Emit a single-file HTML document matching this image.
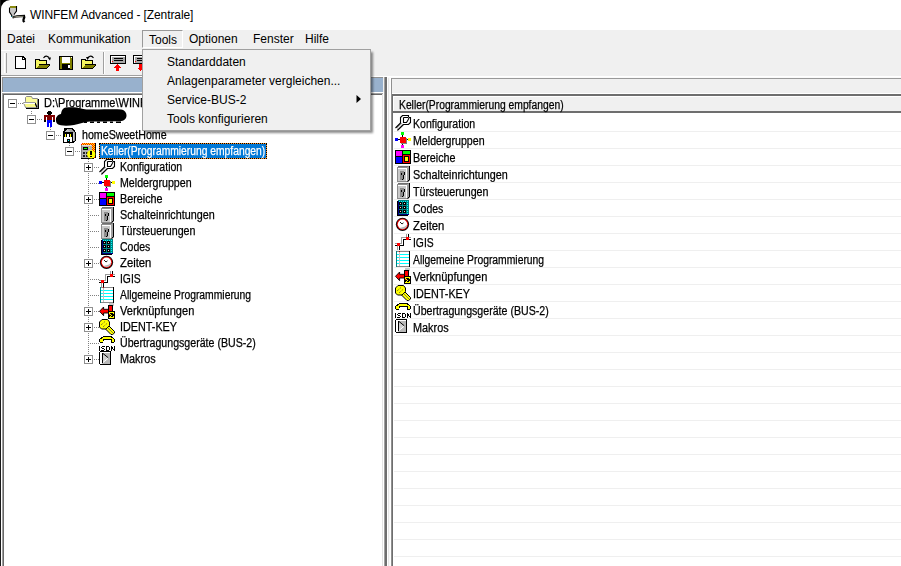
<!DOCTYPE html>
<html><head><meta charset="utf-8">
<style>
*{box-sizing:border-box;margin:0;padding:0}
html,body{width:901px;height:566px;overflow:hidden;background:#fff;position:relative;font-family:"Liberation Sans",sans-serif;color:#000}
.a{position:absolute}
.t12{font-size:12px;line-height:12px;white-space:pre}
.t11{font-size:12px;line-height:12px;white-space:pre;transform:scaleX(0.86);transform-origin:0 0;-webkit-text-stroke:0.25px currentColor}
svg{position:absolute;overflow:visible}
.dh{position:absolute;height:1px;background:repeating-linear-gradient(90deg,#808080 0 1px,transparent 1px 2px)}
.dv{position:absolute;width:1px;background:repeating-linear-gradient(180deg,#808080 0 1px,transparent 1px 2px)}
.box{position:absolute;width:9px;height:9px;border:1px solid #909090;background:#fff}
.mh{position:absolute;left:1px;top:3px;width:5px;height:1px;background:#000}
.mv{position:absolute;left:3px;top:1px;width:1px;height:5px;background:#000}
.sel{border:1px dotted #000;background:linear-gradient(#0078d7,#0078d7) padding-box,#ff9020 border-box}
</style></head><body>
<!-- window corner + left border -->
<div class="a" style="left:0;top:0;width:14px;height:14px;background:#000"></div>
<div class="a" style="left:1px;top:0;width:30px;height:30px;background:#fff;border-top-left-radius:9px"></div>
<div class="a" style="left:0;top:0;width:1px;height:566px;background:#1a1a1a"></div>

<!-- title -->

<svg style="left:9px;top:5px" width="17" height="18" viewBox="0 0 17 18" shape-rendering="crispEdges">
<path d="M1 1 H8 V6 L5.5 10 V11 H3 V10 L1 7Z" fill="#c8c8c8"/>
<rect x="1" y="1" width="7" height="1.5" fill="#8a8a10"/>
<path d="M0.5 2.5 V7 L2.5 10 L3 11.5 M7.5 1 V6 L5 9.5" stroke="#000" fill="none" stroke-width="1.1" shape-rendering="auto"/>
<path d="M3.5 12.5 L8 11.3 L15 11 L15.3 12.5 L14.5 14.5 L14.5 16 L15.5 17" stroke="#000" fill="none" stroke-width="2.2" shape-rendering="auto"/>
<path d="M4.5 12.3 L8 11.5 L14.5 11.3" stroke="#b8b8a0" fill="none" stroke-width="0.8" shape-rendering="auto"/>
<rect x="2" y="11" width="1" height="1" fill="#008080"/>
</svg>
<div class="a t12" style="left:30px;top:9px;letter-spacing:-0.1px">WINFEM Advanced - [Zentrale]</div>

<!-- menubar -->
<div class="a" style="left:1px;top:30px;width:900px;height:19px;background:#f0f0f0"></div>
<div class="a t12" style="left:7px;top:33px">Datei</div>
<div class="a t12" style="left:48px;top:33px">Kommunikation</div>
<div class="a" style="left:142px;top:30px;width:41px;height:18px;border-left:1px solid #999;border-top:1px solid #999;border-right:1px solid #fff;border-bottom:1px solid #fff"></div>
<div class="a t12" style="left:149px;top:34px">Tools</div>
<div class="a t12" style="left:189px;top:33px">Optionen</div>
<div class="a t12" style="left:253px;top:33px">Fenster</div>
<div class="a t12" style="left:305px;top:33px">Hilfe</div>

<!-- toolbar -->
<div class="a" style="left:1px;top:49px;width:900px;height:27px;background:#f0f0f0"></div>
<div class="a" style="left:1px;top:50px;width:370px;height:1px;background:#fff"></div>
<div class="a" style="left:1px;top:75px;width:370px;height:1px;background:#a0a0a0"></div>
<div class="a" style="left:1px;top:76px;width:900px;height:1px;background:#fff"></div>
<div class="a" style="left:388px;top:77px;width:513px;height:1px;background:#fafafa"></div>
<div class="a" style="left:4px;top:53px;width:1px;height:20px;background:#fff"></div>
<div class="a" style="left:6px;top:53px;width:1px;height:20px;background:#a0a0a0"></div>
<div class="a" style="left:103px;top:52px;width:1px;height:22px;background:#a0a0a0"></div>
<div class="a" style="left:104px;top:52px;width:1px;height:22px;background:#fff"></div>



<svg style="left:15px;top:56px" width="12" height="14" shape-rendering="crispEdges">
<path d="M0.5 0.5 H8 L10.5 3 V12.5 H0.5Z" fill="#fff" stroke="#000"/>
<path d="M7.5 0.5 V3.5 H10.5" fill="none" stroke="#000"/>
</svg>
<svg style="left:35px;top:55px" width="17" height="15" shape-rendering="crispEdges">
<path d="M0 4 H4 L5 5 H12 V8.5 H16 L12 14 H0Z" fill="#000"/>
<rect x="1" y="5" width="3" height="8" fill="#f4f460"/>
<rect x="1" y="6" width="10" height="2.5" fill="#f4f460"/>
<path d="M4.5 9.5 H15 L11.5 13 H1.5Z" fill="#808000"/>
<path d="M8.5 3 Q11 -0.5 14 2.5" stroke="#000" fill="none" stroke-width="1.1" shape-rendering="auto"/>
<path d="M12.5 2.5 H16 L15 5.5Z" fill="#000" shape-rendering="auto"/>
</svg>
<svg style="left:59px;top:56px" width="15" height="14" shape-rendering="crispEdges">
<rect x="0" y="0" width="14" height="14" fill="#000"/>
<rect x="1" y="1" width="12" height="12" fill="#808000"/>
<rect x="3" y="1" width="8" height="6" fill="#fff"/>
<rect x="3" y="8" width="8" height="5" fill="#000"/>
<rect x="9" y="9" width="2" height="3" fill="#fff"/>
<rect x="12" y="1" width="1" height="1" fill="#fff"/>
</svg>
<svg style="left:81px;top:55px" width="17" height="15" shape-rendering="crispEdges">
<path d="M0 4 H4 L5 5 H12 V8.5 H16 L12 14 H0Z" fill="#000"/>
<rect x="1" y="5" width="3" height="8" fill="#f4f460"/>
<rect x="1" y="6" width="10" height="2.5" fill="#f4f460"/>
<path d="M4.5 9.5 H15 L11.5 13 H1.5Z" fill="#808000"/>
<path d="M12.5 3 Q10 -0.5 7 2.5" stroke="#000" fill="none" stroke-width="1.1" shape-rendering="auto"/>
<path d="M5 2 H8.5 L6.5 5Z" fill="#000" shape-rendering="auto"/>
</svg>
<svg style="left:110px;top:55px" width="17" height="17" shape-rendering="crispEdges">
<rect x="0" y="0" width="16" height="9" fill="#000"/>
<rect x="1" y="1" width="14" height="7" fill="#fff"/>
<rect x="2" y="2" width="13" height="6" fill="#a8a8a8"/>
<rect x="4" y="3" width="9" height="1" fill="#000"/><rect x="4" y="5" width="9" height="1" fill="#000"/>
<rect x="2" y="6" width="1" height="1" fill="#f00"/>
<path d="M7.5 9 L4 12.5 H6 V16 H9 V12.5 H11Z" fill="#f00"/>
</svg>
<svg style="left:133px;top:55px" width="10" height="17" shape-rendering="crispEdges">
<rect x="0" y="0" width="16" height="9" fill="#000"/>
<rect x="1" y="1" width="14" height="7" fill="#fff"/>
<rect x="2" y="2" width="13" height="6" fill="#a8a8a8"/>
<rect x="4" y="3" width="9" height="1" fill="#000"/><rect x="4" y="5" width="9" height="1" fill="#000"/>
<rect x="2" y="6" width="1" height="1" fill="#f00"/>
<path d="M7.5 16 L4 12.5 H6 V9 H9 V12.5 H11Z" fill="#f00"/>
</svg>

<!-- left pane -->
<div class="a" style="left:1px;top:77px;width:383px;height:489px;background:#f0f0f0"></div>
<div class="a" style="left:2px;top:77px;width:381px;height:15px;background:#98b1cd;border-top:1px solid #909090;border-left:1px solid #909090"></div>
<div class="a" style="left:2px;top:92px;width:381px;height:1px;background:#fff"></div>
<div class="a" style="left:2px;top:93px;width:381px;height:473px;background:#fff;border-left:1px solid #a0a0a0;border-top:1px solid #a0a0a0;box-shadow:inset 1px 1px #696969"></div>
<div class="a" style="left:1px;top:93px;width:1px;height:473px;background:#fff"></div>
<div class="dv" style="left:31px;top:111px;height:4px"></div>
<div class="dv" style="left:50px;top:127px;height:4px"></div>
<div class="dv" style="left:69px;top:143px;height:4px"></div>
<div class="dv" style="left:88px;top:159px;height:196px"></div>
<div class="dh" style="left:18px;top:103px;width:5px"></div>
<div class="box" style="left:8px;top:99px"><i class="mh"></i></div>
<svg style="left:23px;top:95px" width="16" height="16" viewBox="0 0 16 16" shape-rendering="crispEdges"><rect x="3" y="13" width="13" height="1" fill="#000"/><rect x="15" y="4" width="1" height="10" fill="#000"/><path d="M2.5 6.5 L2.5 2.5 L3.5 1.5 H8.5 L9.5 3.5 H14.5 V12.5 H2.5Z" fill="#fbfb9a" stroke="#8a8a8a" shape-rendering="auto"/><path d="M0.5 7.5 H12 L14 12.5 H2.5 Z" fill="#f8f888" stroke="#9a9a9a" shape-rendering="auto"/><path d="M12 8 L14 12.5" stroke="#000" stroke-width="1.2" shape-rendering="auto"/><rect x="1" y="8" width="11" height="1" fill="#fff"/></svg>
<div class="a t11" style="left:44px;top:97px;transform:scaleX(0.916)">D:\Programme\WINFEM Advanced</div>
<div class="dh" style="left:37px;top:119px;width:5px"></div>
<div class="box" style="left:27px;top:115px"><i class="mh"></i></div>
<svg style="left:42px;top:111px" width="16" height="16" viewBox="0 0 16 16" shape-rendering="crispEdges"><rect x="6" y="0" width="3" height="1" fill="#000"/><rect x="5" y="1" width="5" height="2" fill="#000"/><rect x="6" y="3" width="3" height="1" fill="#000"/><rect x="2" y="4" width="11" height="5" fill="#800000"/><rect x="4" y="6" width="1" height="3" fill="#fff"/><rect x="10" y="6" width="1" height="3" fill="#fff"/><rect x="2" y="9" width="2" height="2" fill="#000"/><rect x="11" y="9" width="2" height="2" fill="#000"/><rect x="5" y="9" width="5" height="3" fill="#0000ff"/><rect x="5" y="12" width="2" height="4" fill="#0000ff"/><rect x="8" y="12" width="2" height="4" fill="#0000ff"/></svg>
<div class="dh" style="left:56px;top:135px;width:5px"></div>
<div class="box" style="left:46px;top:131px"><i class="mh"></i></div>
<svg style="left:61px;top:127px" width="16" height="16" viewBox="0 0 16 16" shape-rendering="crispEdges"><path d="M2 5 L5 1 L12 1 L14.5 4.5 L14.5 14 L12 16 L2 16Z" fill="#000"/><path d="M4 5 L6 2 L11 2 L13.5 5 L13.5 13.5 L12 14.5Z" fill="#a0a0a0"/><path d="M3 5 L6 2 L9 5Z" fill="#c0c0c0"/><rect x="3" y="1" width="2" height="3" fill="#000"/><rect x="12" y="6" width="1" height="8" fill="#d0d0d0"/><rect x="2" y="5" width="10" height="11" fill="#000"/><rect x="3" y="10" width="8" height="5" fill="#fff"/><rect x="6" y="7" width="2" height="4" fill="#fff"/><rect x="4" y="7" width="1" height="3" fill="#ff0"/><rect x="9" y="7" width="1" height="3" fill="#ff0"/><rect x="6" y="12" width="3" height="4" fill="#000"/><rect x="7" y="13" width="1" height="1" fill="#0ff"/></svg>
<div class="a t11" style="left:82px;top:129px;transform:scaleX(0.887)">homeSweetHome</div>
<div class="dh" style="left:75px;top:151px;width:5px"></div>
<div class="box" style="left:65px;top:147px"><i class="mh"></i></div>
<svg style="left:80px;top:143px" width="16" height="16" viewBox="0 0 16 16" shape-rendering="crispEdges"><path d="M1 2 L3 0 H15 V14 L13 16 H1Z" fill="#ff0"/><rect x="2" y="0" width="1" height="1" fill="#f00"/><rect x="4" y="0" width="1" height="1" fill="#f00"/><rect x="6" y="0" width="1" height="1" fill="#f00"/><rect x="8" y="0" width="1" height="1" fill="#f00"/><rect x="10" y="0" width="1" height="1" fill="#f00"/><rect x="12" y="0" width="1" height="1" fill="#f00"/><rect x="14" y="0" width="1" height="1" fill="#f00"/><rect x="1" y="1" width="1" height="1" fill="#f00"/><rect x="3" y="1" width="1" height="1" fill="#f00"/><rect x="5" y="1" width="1" height="1" fill="#f00"/><rect x="7" y="1" width="1" height="1" fill="#f00"/><rect x="9" y="1" width="1" height="1" fill="#f00"/><rect x="11" y="1" width="1" height="1" fill="#f00"/><rect x="13" y="1" width="1" height="1" fill="#f00"/><rect x="15" y="1" width="1" height="1" fill="#f00"/><rect x="12" y="2" width="1" height="1" fill="#f00"/><rect x="14" y="2" width="1" height="1" fill="#f00"/><rect x="13" y="3" width="1" height="1" fill="#f00"/><rect x="15" y="3" width="1" height="1" fill="#f00"/><rect x="12" y="4" width="1" height="1" fill="#f00"/><rect x="14" y="4" width="1" height="1" fill="#f00"/><rect x="13" y="5" width="1" height="1" fill="#f00"/><rect x="15" y="5" width="1" height="1" fill="#f00"/><rect x="12" y="6" width="1" height="1" fill="#f00"/><rect x="14" y="6" width="1" height="1" fill="#f00"/><rect x="13" y="7" width="1" height="1" fill="#f00"/><rect x="15" y="7" width="1" height="1" fill="#f00"/><rect x="12" y="8" width="1" height="1" fill="#f00"/><rect x="14" y="8" width="1" height="1" fill="#f00"/><rect x="13" y="9" width="1" height="1" fill="#f00"/><rect x="15" y="9" width="1" height="1" fill="#f00"/><rect x="12" y="10" width="1" height="1" fill="#f00"/><rect x="14" y="10" width="1" height="1" fill="#f00"/><rect x="13" y="11" width="1" height="1" fill="#f00"/><rect x="15" y="11" width="1" height="1" fill="#f00"/><rect x="12" y="12" width="1" height="1" fill="#f00"/><rect x="14" y="12" width="1" height="1" fill="#f00"/><rect x="13" y="13" width="1" height="1" fill="#f00"/><rect x="15" y="13" width="1" height="1" fill="#f00"/><rect x="12" y="14" width="1" height="1" fill="#f00"/><rect x="14" y="14" width="1" height="1" fill="#f00"/><rect x="15" y="0" width="1" height="15" fill="#000"/><rect x="1" y="2" width="11" height="14" fill="#b0b0b0"/><rect x="1" y="2" width="1" height="14" fill="#808080"/><rect x="2" y="2" width="10" height="1" fill="#e0e0e0"/><rect x="1" y="15" width="13" height="1" fill="#000"/><rect x="3" y="4" width="5" height="3" fill="#000"/><rect x="4" y="5" width="3" height="1" fill="#0f0"/><rect x="9" y="4" width="1" height="1" fill="#ff0"/><rect x="3" y="9" width="2" height="2" fill="#222"/><rect x="6" y="9" width="2" height="2" fill="#222"/><rect x="3" y="12" width="2" height="2" fill="#222"/><rect x="6" y="12" width="2" height="2" fill="#222"/><circle cx="11.2" cy="11.3" r="4.1" fill="#ff0" shape-rendering="auto"/><rect x="10" y="8" width="2" height="4" fill="#000"/><rect x="10" y="13" width="2" height="1" fill="#000"/></svg>
<div class="a sel" style="left:99px;top:143px;width:168px;height:16px"></div>
<div class="a t11" style="left:101px;top:145px;color:#fff;transform:scaleX(0.858)">Keller(Programmierung empfangen)</div>
<div class="dh" style="left:94px;top:167px;width:5px"></div>
<div class="box" style="left:84px;top:163px"><i class="mh"></i><i class="mv"></i></div>
<svg style="left:99px;top:159px" width="16" height="16" viewBox="0 0 16 16" shape-rendering="crispEdges"><path d="M1 13 L5.5 8 L8.5 9.5 L3 15Z" fill="#b0b0b0"/><path d="M2.5 13.5 L7 9" stroke="#fff" stroke-width="0.8" shape-rendering="auto"/><path d="M0.5 13 L5.5 8 V2.5 L7.5 0.5 H13.5 V2 M8.5 2.5 H13.5 M8.5 2.5 V7.5 H11.5 L13 5 L14 3 M14 2.5 H15.5 V7.5 L13.5 9.5 H8.5 L3 15 H2" stroke="#000" stroke-width="1.1" fill="none" shape-rendering="auto"/></svg>
<div class="a t11" style="left:120px;top:161px;transform:scaleX(0.88)">Konfiguration</div>
<div class="dh" style="left:88px;top:183px;width:11px"></div>
<svg style="left:99px;top:175px" width="16" height="16" viewBox="0 0 16 16" shape-rendering="crispEdges"><rect x="7" y="2" width="1" height="12" fill="#000"/><rect x="2" y="7" width="12" height="1" fill="#000"/><rect x="6" y="6" width="6" height="6" fill="#808080"/><rect x="5" y="5" width="6" height="6" fill="#f00"/><rect x="6" y="0" width="3" height="3" fill="#0f0"/><rect x="0" y="6" width="3" height="3" fill="#00f"/><rect x="13" y="6" width="3" height="3" fill="#ff0"/><rect x="6" y="13" width="3" height="3" fill="#f0f"/></svg>
<div class="a t11" style="left:120px;top:177px;transform:scaleX(0.887)">Meldergruppen</div>
<div class="dh" style="left:94px;top:199px;width:5px"></div>
<div class="box" style="left:84px;top:195px"><i class="mh"></i><i class="mv"></i></div>
<svg style="left:99px;top:191px" width="16" height="16" viewBox="0 0 16 16" shape-rendering="crispEdges"><rect x="0" y="1" width="16" height="14" fill="#000"/><rect x="1" y="2" width="6" height="5" fill="#f0f"/><rect x="8" y="2" width="7" height="3" fill="#0f0"/><rect x="1" y="8" width="6" height="6" fill="#00f"/><rect x="8" y="6" width="7" height="8" fill="#f00"/><rect x="9" y="7" width="5" height="6" fill="#000"/><rect x="10" y="8" width="3" height="4" fill="#ff0"/></svg>
<div class="a t11" style="left:120px;top:193px;transform:scaleX(0.897)">Bereiche</div>
<div class="dh" style="left:88px;top:215px;width:11px"></div>
<svg style="left:99px;top:207px" width="16" height="16" viewBox="0 0 16 16" shape-rendering="crispEdges"><path d="M2 1 L3 0 H14 L15 0 V14 L13 16 H2Z" fill="#8c8c8c"/><rect x="3" y="3" width="8" height="12" fill="#c8c8c8"/><rect x="3" y="2" width="9" height="1" fill="#fff"/><rect x="11" y="2" width="1" height="13" fill="#fff"/><rect x="12" y="1" width="2" height="14" fill="#a0a0a0"/><rect x="3" y="0" width="10" height="1" fill="#707070"/><rect x="14" y="0" width="1" height="14" fill="#000"/><path d="M12.5 15.5 L14.5 13.5" stroke="#000" shape-rendering="auto"/><rect x="5" y="5" width="4" height="9" fill="#8c8c8c"/><rect x="6" y="7" width="1" height="2" fill="#000"/><rect x="9" y="6" width="1" height="3" fill="#000"/><rect x="8" y="9" width="1" height="4" fill="#000"/><rect x="7" y="13" width="1" height="1" fill="#000"/></svg>
<div class="a t11" style="left:120px;top:209px;transform:scaleX(0.899)">Schalteinrichtungen</div>
<div class="dh" style="left:88px;top:231px;width:11px"></div>
<svg style="left:99px;top:223px" width="16" height="16" viewBox="0 0 16 16" shape-rendering="crispEdges"><path d="M2 1 L3 0 H14 L15 0 V14 L13 16 H2Z" fill="#8c8c8c"/><rect x="3" y="3" width="8" height="12" fill="#c8c8c8"/><rect x="3" y="2" width="9" height="1" fill="#fff"/><rect x="11" y="2" width="1" height="13" fill="#fff"/><rect x="12" y="1" width="2" height="14" fill="#a0a0a0"/><rect x="3" y="0" width="10" height="1" fill="#707070"/><rect x="14" y="0" width="1" height="14" fill="#000"/><path d="M12.5 15.5 L14.5 13.5" stroke="#000" shape-rendering="auto"/><rect x="5" y="5" width="4" height="9" fill="#8c8c8c"/><rect x="6" y="7" width="1" height="2" fill="#000"/><rect x="9" y="6" width="1" height="3" fill="#000"/><rect x="8" y="9" width="1" height="4" fill="#000"/><rect x="7" y="13" width="1" height="1" fill="#000"/></svg>
<div class="a t11" style="left:120px;top:225px;transform:scaleX(0.891)">Türsteuerungen</div>
<div class="dh" style="left:88px;top:247px;width:11px"></div>
<svg style="left:99px;top:239px" width="16" height="16" viewBox="0 0 16 16" shape-rendering="crispEdges"><rect x="2" y="1" width="11" height="15" fill="#000"/><rect x="3" y="0" width="11" height="15" fill="#008080"/><rect x="3" y="1" width="1" height="14" fill="#000080"/><rect x="3" y="14" width="11" height="1" fill="#000080"/><path d="M4 1h1v1h-1z M6 1h1v1h-1z M8 1h1v1h-1z M10 1h1v1h-1z M12 1h1v1h-1z M12 3h1v1h-1z M12 5h1v1h-1z M12 7h1v1h-1z M12 9h1v1h-1z M12 11h1v1h-1z M12 13h1v1h-1z" fill="#0ff"/><rect x="4" y="2" width="3" height="3" fill="#000"/><rect x="5" y="3" width="1" height="1" fill="#e8d0d0"/><rect x="4" y="6" width="3" height="3" fill="#000"/><rect x="5" y="7" width="1" height="1" fill="#e8d0d0"/><rect x="4" y="10" width="3" height="3" fill="#000"/><rect x="5" y="11" width="1" height="1" fill="#e8d0d0"/><rect x="8" y="2" width="3" height="3" fill="#000"/><rect x="9" y="3" width="1" height="1" fill="#e8d0d0"/><rect x="8" y="6" width="3" height="3" fill="#000"/><rect x="9" y="7" width="1" height="1" fill="#e8d0d0"/><rect x="8" y="10" width="3" height="3" fill="#000"/><rect x="9" y="11" width="1" height="1" fill="#e8d0d0"/></svg>
<div class="a t11" style="left:120px;top:241px;transform:scaleX(0.874)">Codes</div>
<div class="dh" style="left:94px;top:263px;width:5px"></div>
<div class="box" style="left:84px;top:259px"><i class="mh"></i><i class="mv"></i></div>
<svg style="left:99px;top:255px" width="16" height="16" viewBox="0 0 16 16" shape-rendering="crispEdges"><circle cx="7.5" cy="7.3" r="6.6" fill="#000" shape-rendering="auto"/><circle cx="7.5" cy="7.3" r="5.7" fill="#e00000" shape-rendering="auto"/><circle cx="7.5" cy="7.3" r="4.7" fill="#fff" shape-rendering="auto"/><path d="M4.5 11 A4.7 4.7 0 0 0 12.2 7.3 L10 9.5Z" fill="#b8b8b8" shape-rendering="auto"/><path d="M5 5 L7 7 L8.5 5.8" stroke="#000" fill="none" stroke-width="0.9" shape-rendering="auto"/></svg>
<div class="a t11" style="left:120px;top:257px;transform:scaleX(0.94)">Zeiten</div>
<div class="dh" style="left:88px;top:279px;width:11px"></div>
<svg style="left:99px;top:271px" width="16" height="16" viewBox="0 0 16 16" shape-rendering="crispEdges"><path d="M13.5 0 V5.5 H15.5 M13.5 5.5 H8.5 V11.5 H0 M4.5 11.5 V16" stroke="#000" stroke-width="1" fill="none"/><path d="M11.5 0 V3.5 H15.5 M11.5 3.5 H6.5 V9.5 H0 M2.5 11 V16" stroke="#999" stroke-width="1" fill="none"/><rect x="11" y="3" width="3" height="3" fill="#f00"/><rect x="2" y="9" width="3" height="3" fill="#f00"/></svg>
<div class="a t11" style="left:120px;top:273px;transform:scaleX(0.86)">IGIS</div>
<div class="dh" style="left:88px;top:295px;width:11px"></div>
<svg style="left:99px;top:287px" width="16" height="16" viewBox="0 0 16 16" shape-rendering="crispEdges"><rect x="1" y="0" width="14" height="16" fill="#fff"/><rect x="1" y="0" width="14" height="1" fill="#888"/><rect x="1" y="15" width="14" height="1" fill="#888"/><rect x="1" y="0" width="1" height="16" fill="#008080"/><rect x="14" y="0" width="1" height="16" fill="#000"/><rect x="2" y="3" width="12" height="1" fill="#0ff"/><rect x="2" y="6" width="12" height="1" fill="#0ff"/><rect x="2" y="9" width="12" height="1" fill="#0ff"/><rect x="2" y="12" width="12" height="1" fill="#0ff"/><rect x="4" y="1" width="1" height="14" fill="#c0c0c0"/><rect x="4" y="0" width="1" height="1" fill="#c00000"/></svg>
<div class="a t11" style="left:120px;top:289px;transform:scaleX(0.862)">Allgemeine Programmierung</div>
<div class="dh" style="left:94px;top:311px;width:5px"></div>
<div class="box" style="left:84px;top:307px"><i class="mh"></i><i class="mv"></i></div>
<svg style="left:99px;top:303px" width="16" height="16" viewBox="0 0 16 16" shape-rendering="crispEdges"><path d="M10 0 L15 0 L15 3 L11 3Z" fill="#c8c8c8"/><path d="M0.5 8.3 L4.6 4 L4.6 6.3 L10 6.3 L10 10 L4.6 10 L4.6 12.7Z" fill="#f00" stroke="#000" stroke-width="0.9" shape-rendering="auto"/><rect x="9" y="2" width="5" height="7" fill="#000"/><rect x="10" y="3" width="3" height="5" fill="#f00"/><rect x="9" y="8" width="7" height="8" fill="#000"/><path d="M10 9 h5 v1 h-4 v1 h-1z M10 14 h5 v1 h-5z M14 13 h1 v1 h-1z M14 9 h1 v2 h-1z M11 11 h1 v1 h-1z M12 12 h1 v1 h-1z M11 13 h1 v1 h-1z" fill="#ff0"/><rect x="10" y="11" width="1" height="1" fill="#f00"/></svg>
<div class="a t11" style="left:120px;top:305px;transform:scaleX(0.92)">Verknüpfungen</div>
<div class="dh" style="left:94px;top:327px;width:5px"></div>
<div class="box" style="left:84px;top:323px"><i class="mh"></i><i class="mv"></i></div>
<svg style="left:99px;top:319px" width="16" height="16" viewBox="0 0 16 16" shape-rendering="crispEdges"><path d="M9 6 L15.5 12.5 L15.5 14 L13.5 15.5 L12 15.5 L6 9.5Z" fill="#ff0" stroke="#000" stroke-width="1" shape-rendering="auto"/><path d="M3 0.5 L8.5 0.5 L10.5 3 L10.5 6.5 L7 10 L2.5 10 L0.5 8 L0.5 3Z" fill="#ff0" stroke="#000" stroke-width="1" shape-rendering="auto"/><path d="M6.5 8.5 L9 6" stroke="#ff0" stroke-width="1.6" shape-rendering="auto"/><path d="M2 6 L6 2.5 M4 8 L8.5 4" stroke="#333" stroke-width="0.8" stroke-dasharray="1 1" fill="none" shape-rendering="auto"/><path d="M8.5 8.5 L14 14" stroke="#336" stroke-width="0.6" shape-rendering="auto"/></svg>
<div class="a t11" style="left:120px;top:321px;transform:scaleX(0.9)">IDENT-KEY</div>
<div class="dh" style="left:88px;top:343px;width:11px"></div>
<svg style="left:99px;top:335px" width="16" height="16" viewBox="0 0 16 16" shape-rendering="crispEdges"><path d="M4 1 H12 L13 2 L15 3 L16 4.5 L16 7 L15 7.5 L12 7.5 L11.5 6 L11.5 5 H4.5 L4.5 6 L4 7.5 L1 7.5 L0 7 L0 4.5 L1 3 L3 2Z" fill="#000"/><path d="M4.5 2 H11.5 L12.5 3 L14.5 4 L15 5 L15 6.5 L12.5 6.5 L12.5 4 H3.5 L3.5 6.5 L1 6.5 L1 5 L1.5 4 L3.5 3Z" fill="#ff0"/><path d="M0 11h1v5h-1z M3 11h3v1h-3z M2 12h1v1h-1z M3 13h2v1h-2z M5 14h1v1h-1z M2 15h3v1h-3z M7 11h3v1h-3z M7 12h1v3h-1z M10 12h1v3h-1z M7 15h3v1h-3z M12 11h1v5h-1z M15 11h1v5h-1z M13 12h1v2h-1z M14 14h1v1h-1z" fill="#000"/></svg>
<div class="a t11" style="left:120px;top:337px;transform:scaleX(0.885)">Übertragungsgeräte (BUS-2)</div>
<div class="dh" style="left:94px;top:359px;width:5px"></div>
<div class="box" style="left:84px;top:355px"><i class="mh"></i><i class="mv"></i></div>
<svg style="left:99px;top:351px" width="16" height="16" viewBox="0 0 16 16" shape-rendering="crispEdges"><path d="M1 0 H11 L12 1 V13 L11 14 H1 L0 13 V1Z" fill="#000"/><rect x="1" y="1" width="10" height="12" fill="#b8b8b8"/><rect x="1" y="1" width="2" height="12" fill="#fff"/><rect x="1" y="1" width="10" height="1" fill="#fff"/><path d="M4 2.5 L9.5 7 L4 11.5" fill="#d0d0d0"/><rect x="3" y="2" width="1" height="10" fill="#000"/><path d="M4 2.5 L9.5 7" stroke="#000" stroke-width="1" shape-rendering="auto"/><path d="M4 11.5 L9.5 7" stroke="#fff" stroke-width="1" shape-rendering="auto"/></svg>
<div class="a t11" style="left:120px;top:353px;transform:scaleX(0.905)">Makros</div>
<svg style="left:54px;top:105px" width="76" height="24" shape-rendering="auto">
<path d="M30 16.5 h3 v1.5 h-3z M36 16.5 h4 v1.5 h-4z M43 16.5 h3 v1.5 h-3z M49 16.5 h4 v1.5 h-4z M56 16.5 h3 v1.5 h-3z M62 16.5 h5 v1.5 h-5z" fill="#000"/>
<path d="M2 15.5 C1.5 12 4 9.5 7 9 C7.5 6 8.5 3 12 2.5 C17 2 22 2 27 3.5 C30 4.5 34 4.5 40 4.5 C50 4.5 60 4 67 4.5 C71 5 72.5 8 72.5 10.5 C72.5 14 70 16 66 16.3 C56 16.5 44 16.3 36 16.5 C30 17 26 18.5 20 20 C14 21 6 21 3.5 19 C2.5 18 2 17 2 15.5Z" fill="#000"/>
</svg>


<div class="a" style="left:382px;top:94px;width:1px;height:472px;background:#e3e3e3"></div>
<div class="a" style="left:383px;top:92px;width:1px;height:474px;background:#fff"></div>
<!-- splitter -->
<div class="a" style="left:384px;top:77px;width:3px;height:489px;background:#6e6e6e;border-left:1px solid #a0a0a0"></div>
<div class="a" style="left:387px;top:78px;width:1px;height:488px;background:#fff"></div>
<div class="a" style="left:388px;top:78px;width:3px;height:488px;background:linear-gradient(90deg,#e6e6e6 0 1px,#f8f8f8 1px 2px,#fff 2px 3px)"></div>

<!-- right pane -->
<div class="a" style="left:391px;top:78px;width:510px;height:488px;background:#f0f0f0;border-left:1px solid #909090;border-top:1px solid #999"></div>
<div class="a" style="left:392px;top:93px;width:509px;height:1px;background:#fff"></div>
<div class="a" style="left:392px;top:94px;width:509px;height:472px;background:#fff;border-left:1px solid #6e6e6e;border-top:2px solid #6e6e6e"></div>
<div class="a" style="left:394px;top:96px;width:507px;height:16px;background:#f0f0f0;border-top:1px solid #fff"></div>
<div class="a" style="left:393px;top:111px;width:508px;height:2px;background:#6e6e6e"></div>
<div class="a t11" style="left:399px;top:99px">Keller(Programmierung empfangen)</div>
<svg style="left:395px;top:115px" width="16" height="16" viewBox="0 0 16 16" shape-rendering="crispEdges"><path d="M1 13 L5.5 8 L8.5 9.5 L3 15Z" fill="#b0b0b0"/><path d="M2.5 13.5 L7 9" stroke="#fff" stroke-width="0.8" shape-rendering="auto"/><path d="M0.5 13 L5.5 8 V2.5 L7.5 0.5 H13.5 V2 M8.5 2.5 H13.5 M8.5 2.5 V7.5 H11.5 L13 5 L14 3 M14 2.5 H15.5 V7.5 L13.5 9.5 H8.5 L3 15 H2" stroke="#000" stroke-width="1.1" fill="none" shape-rendering="auto"/></svg>
<div class="a t11" style="left:413px;top:118px;transform:scaleX(0.88)">Konfiguration</div>
<svg style="left:395px;top:132px" width="16" height="16" viewBox="0 0 16 16" shape-rendering="crispEdges"><rect x="7" y="2" width="1" height="12" fill="#000"/><rect x="2" y="7" width="12" height="1" fill="#000"/><rect x="6" y="6" width="6" height="6" fill="#808080"/><rect x="5" y="5" width="6" height="6" fill="#f00"/><rect x="6" y="0" width="3" height="3" fill="#0f0"/><rect x="0" y="6" width="3" height="3" fill="#00f"/><rect x="13" y="6" width="3" height="3" fill="#ff0"/><rect x="6" y="13" width="3" height="3" fill="#f0f"/></svg>
<div class="a t11" style="left:413px;top:135px;transform:scaleX(0.887)">Meldergruppen</div>
<svg style="left:395px;top:149px" width="16" height="16" viewBox="0 0 16 16" shape-rendering="crispEdges"><rect x="0" y="1" width="16" height="14" fill="#000"/><rect x="1" y="2" width="6" height="5" fill="#f0f"/><rect x="8" y="2" width="7" height="3" fill="#0f0"/><rect x="1" y="8" width="6" height="6" fill="#00f"/><rect x="8" y="6" width="7" height="8" fill="#f00"/><rect x="9" y="7" width="5" height="6" fill="#000"/><rect x="10" y="8" width="3" height="4" fill="#ff0"/></svg>
<div class="a t11" style="left:413px;top:152px;transform:scaleX(0.897)">Bereiche</div>
<svg style="left:395px;top:166px" width="16" height="16" viewBox="0 0 16 16" shape-rendering="crispEdges"><path d="M2 1 L3 0 H14 L15 0 V14 L13 16 H2Z" fill="#8c8c8c"/><rect x="3" y="3" width="8" height="12" fill="#c8c8c8"/><rect x="3" y="2" width="9" height="1" fill="#fff"/><rect x="11" y="2" width="1" height="13" fill="#fff"/><rect x="12" y="1" width="2" height="14" fill="#a0a0a0"/><rect x="3" y="0" width="10" height="1" fill="#707070"/><rect x="14" y="0" width="1" height="14" fill="#000"/><path d="M12.5 15.5 L14.5 13.5" stroke="#000" shape-rendering="auto"/><rect x="5" y="5" width="4" height="9" fill="#8c8c8c"/><rect x="6" y="7" width="1" height="2" fill="#000"/><rect x="9" y="6" width="1" height="3" fill="#000"/><rect x="8" y="9" width="1" height="4" fill="#000"/><rect x="7" y="13" width="1" height="1" fill="#000"/></svg>
<div class="a t11" style="left:413px;top:169px;transform:scaleX(0.899)">Schalteinrichtungen</div>
<svg style="left:395px;top:183px" width="16" height="16" viewBox="0 0 16 16" shape-rendering="crispEdges"><path d="M2 1 L3 0 H14 L15 0 V14 L13 16 H2Z" fill="#8c8c8c"/><rect x="3" y="3" width="8" height="12" fill="#c8c8c8"/><rect x="3" y="2" width="9" height="1" fill="#fff"/><rect x="11" y="2" width="1" height="13" fill="#fff"/><rect x="12" y="1" width="2" height="14" fill="#a0a0a0"/><rect x="3" y="0" width="10" height="1" fill="#707070"/><rect x="14" y="0" width="1" height="14" fill="#000"/><path d="M12.5 15.5 L14.5 13.5" stroke="#000" shape-rendering="auto"/><rect x="5" y="5" width="4" height="9" fill="#8c8c8c"/><rect x="6" y="7" width="1" height="2" fill="#000"/><rect x="9" y="6" width="1" height="3" fill="#000"/><rect x="8" y="9" width="1" height="4" fill="#000"/><rect x="7" y="13" width="1" height="1" fill="#000"/></svg>
<div class="a t11" style="left:413px;top:186px;transform:scaleX(0.891)">Türsteuerungen</div>
<svg style="left:395px;top:200px" width="16" height="16" viewBox="0 0 16 16" shape-rendering="crispEdges"><rect x="2" y="1" width="11" height="15" fill="#000"/><rect x="3" y="0" width="11" height="15" fill="#008080"/><rect x="3" y="1" width="1" height="14" fill="#000080"/><rect x="3" y="14" width="11" height="1" fill="#000080"/><path d="M4 1h1v1h-1z M6 1h1v1h-1z M8 1h1v1h-1z M10 1h1v1h-1z M12 1h1v1h-1z M12 3h1v1h-1z M12 5h1v1h-1z M12 7h1v1h-1z M12 9h1v1h-1z M12 11h1v1h-1z M12 13h1v1h-1z" fill="#0ff"/><rect x="4" y="2" width="3" height="3" fill="#000"/><rect x="5" y="3" width="1" height="1" fill="#e8d0d0"/><rect x="4" y="6" width="3" height="3" fill="#000"/><rect x="5" y="7" width="1" height="1" fill="#e8d0d0"/><rect x="4" y="10" width="3" height="3" fill="#000"/><rect x="5" y="11" width="1" height="1" fill="#e8d0d0"/><rect x="8" y="2" width="3" height="3" fill="#000"/><rect x="9" y="3" width="1" height="1" fill="#e8d0d0"/><rect x="8" y="6" width="3" height="3" fill="#000"/><rect x="9" y="7" width="1" height="1" fill="#e8d0d0"/><rect x="8" y="10" width="3" height="3" fill="#000"/><rect x="9" y="11" width="1" height="1" fill="#e8d0d0"/></svg>
<div class="a t11" style="left:413px;top:203px;transform:scaleX(0.874)">Codes</div>
<svg style="left:395px;top:217px" width="16" height="16" viewBox="0 0 16 16" shape-rendering="crispEdges"><circle cx="7.5" cy="7.3" r="6.6" fill="#000" shape-rendering="auto"/><circle cx="7.5" cy="7.3" r="5.7" fill="#e00000" shape-rendering="auto"/><circle cx="7.5" cy="7.3" r="4.7" fill="#fff" shape-rendering="auto"/><path d="M4.5 11 A4.7 4.7 0 0 0 12.2 7.3 L10 9.5Z" fill="#b8b8b8" shape-rendering="auto"/><path d="M5 5 L7 7 L8.5 5.8" stroke="#000" fill="none" stroke-width="0.9" shape-rendering="auto"/></svg>
<div class="a t11" style="left:413px;top:220px;transform:scaleX(0.94)">Zeiten</div>
<svg style="left:395px;top:234px" width="16" height="16" viewBox="0 0 16 16" shape-rendering="crispEdges"><path d="M13.5 0 V5.5 H15.5 M13.5 5.5 H8.5 V11.5 H0 M4.5 11.5 V16" stroke="#000" stroke-width="1" fill="none"/><path d="M11.5 0 V3.5 H15.5 M11.5 3.5 H6.5 V9.5 H0 M2.5 11 V16" stroke="#999" stroke-width="1" fill="none"/><rect x="11" y="3" width="3" height="3" fill="#f00"/><rect x="2" y="9" width="3" height="3" fill="#f00"/></svg>
<div class="a t11" style="left:413px;top:237px;transform:scaleX(0.86)">IGIS</div>
<svg style="left:395px;top:251px" width="16" height="16" viewBox="0 0 16 16" shape-rendering="crispEdges"><rect x="1" y="0" width="14" height="16" fill="#fff"/><rect x="1" y="0" width="14" height="1" fill="#888"/><rect x="1" y="15" width="14" height="1" fill="#888"/><rect x="1" y="0" width="1" height="16" fill="#008080"/><rect x="14" y="0" width="1" height="16" fill="#000"/><rect x="2" y="3" width="12" height="1" fill="#0ff"/><rect x="2" y="6" width="12" height="1" fill="#0ff"/><rect x="2" y="9" width="12" height="1" fill="#0ff"/><rect x="2" y="12" width="12" height="1" fill="#0ff"/><rect x="4" y="1" width="1" height="14" fill="#c0c0c0"/><rect x="4" y="0" width="1" height="1" fill="#c00000"/></svg>
<div class="a t11" style="left:413px;top:254px;transform:scaleX(0.862)">Allgemeine Programmierung</div>
<svg style="left:395px;top:268px" width="16" height="16" viewBox="0 0 16 16" shape-rendering="crispEdges"><path d="M10 0 L15 0 L15 3 L11 3Z" fill="#c8c8c8"/><path d="M0.5 8.3 L4.6 4 L4.6 6.3 L10 6.3 L10 10 L4.6 10 L4.6 12.7Z" fill="#f00" stroke="#000" stroke-width="0.9" shape-rendering="auto"/><rect x="9" y="2" width="5" height="7" fill="#000"/><rect x="10" y="3" width="3" height="5" fill="#f00"/><rect x="9" y="8" width="7" height="8" fill="#000"/><path d="M10 9 h5 v1 h-4 v1 h-1z M10 14 h5 v1 h-5z M14 13 h1 v1 h-1z M14 9 h1 v2 h-1z M11 11 h1 v1 h-1z M12 12 h1 v1 h-1z M11 13 h1 v1 h-1z" fill="#ff0"/><rect x="10" y="11" width="1" height="1" fill="#f00"/></svg>
<div class="a t11" style="left:413px;top:271px;transform:scaleX(0.92)">Verknüpfungen</div>
<svg style="left:395px;top:285px" width="16" height="16" viewBox="0 0 16 16" shape-rendering="crispEdges"><path d="M9 6 L15.5 12.5 L15.5 14 L13.5 15.5 L12 15.5 L6 9.5Z" fill="#ff0" stroke="#000" stroke-width="1" shape-rendering="auto"/><path d="M3 0.5 L8.5 0.5 L10.5 3 L10.5 6.5 L7 10 L2.5 10 L0.5 8 L0.5 3Z" fill="#ff0" stroke="#000" stroke-width="1" shape-rendering="auto"/><path d="M6.5 8.5 L9 6" stroke="#ff0" stroke-width="1.6" shape-rendering="auto"/><path d="M2 6 L6 2.5 M4 8 L8.5 4" stroke="#333" stroke-width="0.8" stroke-dasharray="1 1" fill="none" shape-rendering="auto"/><path d="M8.5 8.5 L14 14" stroke="#336" stroke-width="0.6" shape-rendering="auto"/></svg>
<div class="a t11" style="left:413px;top:288px;transform:scaleX(0.9)">IDENT-KEY</div>
<svg style="left:395px;top:302px" width="16" height="16" viewBox="0 0 16 16" shape-rendering="crispEdges"><path d="M4 1 H12 L13 2 L15 3 L16 4.5 L16 7 L15 7.5 L12 7.5 L11.5 6 L11.5 5 H4.5 L4.5 6 L4 7.5 L1 7.5 L0 7 L0 4.5 L1 3 L3 2Z" fill="#000"/><path d="M4.5 2 H11.5 L12.5 3 L14.5 4 L15 5 L15 6.5 L12.5 6.5 L12.5 4 H3.5 L3.5 6.5 L1 6.5 L1 5 L1.5 4 L3.5 3Z" fill="#ff0"/><path d="M0 11h1v5h-1z M3 11h3v1h-3z M2 12h1v1h-1z M3 13h2v1h-2z M5 14h1v1h-1z M2 15h3v1h-3z M7 11h3v1h-3z M7 12h1v3h-1z M10 12h1v3h-1z M7 15h3v1h-3z M12 11h1v5h-1z M15 11h1v5h-1z M13 12h1v2h-1z M14 14h1v1h-1z" fill="#000"/></svg>
<div class="a t11" style="left:413px;top:305px;transform:scaleX(0.885)">Übertragungsgeräte (BUS-2)</div>
<svg style="left:395px;top:319px" width="16" height="16" viewBox="0 0 16 16" shape-rendering="crispEdges"><path d="M1 0 H11 L12 1 V13 L11 14 H1 L0 13 V1Z" fill="#000"/><rect x="1" y="1" width="10" height="12" fill="#b8b8b8"/><rect x="1" y="1" width="2" height="12" fill="#fff"/><rect x="1" y="1" width="10" height="1" fill="#fff"/><path d="M4 2.5 L9.5 7 L4 11.5" fill="#d0d0d0"/><rect x="3" y="2" width="1" height="10" fill="#000"/><path d="M4 2.5 L9.5 7" stroke="#000" stroke-width="1" shape-rendering="auto"/><path d="M4 11.5 L9.5 7" stroke="#fff" stroke-width="1" shape-rendering="auto"/></svg>
<div class="a t11" style="left:413px;top:322px;transform:scaleX(0.905)">Makros</div>
<div class="a" style="left:394px;top:131px;width:507px;height:1px;background:#efefef"></div>
<div class="a" style="left:394px;top:148px;width:507px;height:1px;background:#efefef"></div>
<div class="a" style="left:394px;top:165px;width:507px;height:1px;background:#efefef"></div>
<div class="a" style="left:394px;top:182px;width:507px;height:1px;background:#efefef"></div>
<div class="a" style="left:394px;top:199px;width:507px;height:1px;background:#efefef"></div>
<div class="a" style="left:394px;top:216px;width:507px;height:1px;background:#efefef"></div>
<div class="a" style="left:394px;top:233px;width:507px;height:1px;background:#efefef"></div>
<div class="a" style="left:394px;top:250px;width:507px;height:1px;background:#efefef"></div>
<div class="a" style="left:394px;top:267px;width:507px;height:1px;background:#efefef"></div>
<div class="a" style="left:394px;top:284px;width:507px;height:1px;background:#efefef"></div>
<div class="a" style="left:394px;top:301px;width:507px;height:1px;background:#efefef"></div>
<div class="a" style="left:394px;top:318px;width:507px;height:1px;background:#efefef"></div>
<div class="a" style="left:394px;top:335px;width:507px;height:1px;background:#efefef"></div>
<div class="a" style="left:394px;top:352px;width:507px;height:1px;background:#efefef"></div>
<div class="a" style="left:394px;top:369px;width:507px;height:1px;background:#efefef"></div>
<div class="a" style="left:394px;top:386px;width:507px;height:1px;background:#efefef"></div>
<div class="a" style="left:394px;top:403px;width:507px;height:1px;background:#efefef"></div>
<div class="a" style="left:394px;top:420px;width:507px;height:1px;background:#efefef"></div>
<div class="a" style="left:394px;top:437px;width:507px;height:1px;background:#efefef"></div>
<div class="a" style="left:394px;top:454px;width:507px;height:1px;background:#efefef"></div>
<div class="a" style="left:394px;top:471px;width:507px;height:1px;background:#efefef"></div>
<div class="a" style="left:394px;top:488px;width:507px;height:1px;background:#efefef"></div>
<div class="a" style="left:394px;top:505px;width:507px;height:1px;background:#efefef"></div>
<div class="a" style="left:394px;top:522px;width:507px;height:1px;background:#efefef"></div>
<div class="a" style="left:394px;top:539px;width:507px;height:1px;background:#efefef"></div>
<div class="a" style="left:394px;top:556px;width:507px;height:1px;background:#efefef"></div>

<!-- menu popup -->
<div class="a" style="left:145px;top:52px;width:228px;height:81px;background:rgba(0,0,0,0.45);filter:blur(1.2px)"></div>
<div class="a" style="left:142px;top:49px;width:229px;height:82px;background:#f0f0f0;border:1px solid #a0a0a0"></div>
<div class="a t12" style="left:167px;top:56px">Standarddaten</div>
<div class="a t12" style="left:167px;top:75px">Anlagenparameter vergleichen...</div>
<div class="a t12" style="left:167px;top:94px">Service-BUS-2</div>
<div class="a t12" style="left:167px;top:113px">Tools konfigurieren</div>
<svg style="left:356px;top:95px" width="6" height="8"><path d="M0.5 0 L5 4 L0.5 8Z" fill="#000"/></svg>
</body></html>
